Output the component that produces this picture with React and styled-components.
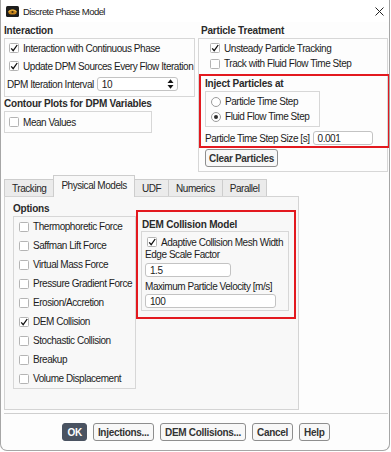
import React from "react";
import styled, { createGlobalStyle } from "styled-components";

const GlobalStyle = createGlobalStyle`
  * { box-sizing: border-box; }
  body {
    margin: 0;
    background: #ffffff;
    font-family: "Liberation Sans", Arial, sans-serif;
    font-size: 10px;
    letter-spacing: -0.45px;
    color: #1c1c1c;
  }
`;

const Window = styled.div`
  width: 390px;
  height: 451px;
  border: 1px solid #a6a6a6;
  border-top: none;
  border-radius: 0 0 7px 7px;
  background: #fdfdfd;
  display: flex;
  flex-direction: column;
  overflow: hidden;
`;

const TitleBar = styled.div`
  height: 22px;
  display: flex;
  align-items: center;
  gap: 4px;
  padding: 0 5px 0 5px;
  background: #ffffff;
`;

const TitleText = styled.span`
  font-size: 9.5px;
  letter-spacing: -0.55px;
  color: #1a1a1a;
`;

const CloseIcon = styled.svg`
  margin-left: auto;
`;

const Body = styled.div`
  flex: 1;
  display: flex;
  flex-direction: column;
  padding: 0 1px 0 3px;
`;

const Top = styled.div`
  display: grid;
  grid-template-columns: 191px 190px;
  column-gap: 3px;
  padding-top: 2px;
`;

const Column = styled.div`
  display: flex;
  flex-direction: column;
  align-items: stretch;
`;

const SectionTitle = styled.div`
  height: ${(p) => p.$h || 14}px;
  line-height: ${(p) => p.$h || 14}px;
  padding-left: ${(p) => p.$indent || 0}px;
  font-weight: bold;
  letter-spacing: -0.2px;
  color: #2a2a2a;
  white-space: nowrap;
`;

const GroupBox = styled.div`
  border: 1px solid #d7d7d7;
  padding: ${(p) => p.$pad || "0"};
  width: ${(p) => (p.$w ? `${p.$w}px` : "auto")};
  display: flex;
  flex-direction: column;
`;

const Highlight = styled.div`
  border: 2px solid #e3191f;
  padding: ${(p) => p.$pad || "0"};
  margin: ${(p) => p.$margin || "0"};
  display: flex;
  flex-direction: column;
  align-items: flex-start;
`;

const Row = styled.div`
  display: flex;
  align-items: center;
  gap: ${(p) => p.$gap ?? 4}px;
  height: ${(p) => p.$h || 18}px;
  padding-left: ${(p) => p.$indent || 0}px;
  padding-top: ${(p) => p.$top || 0}px;
  white-space: nowrap;
`;

const Box = styled.span`
  width: 10px;
  height: 10px;
  border: 1px solid #b4b4b4;
  border-radius: 1.5px;
  background: #ffffff;
  display: inline-flex;
  align-items: center;
  justify-content: center;
  flex: none;
`;

const Radio = styled.span`
  width: 10px;
  height: 10px;
  border: 1px solid #9c9c9c;
  border-radius: 50%;
  background: #ffffff;
  display: inline-flex;
  align-items: center;
  justify-content: center;
  flex: none;

  &::after {
    content: "";
    width: 4px;
    height: 4px;
    border-radius: 50%;
    background: ${(p) => (p.$on ? "#2d2d2d" : "transparent")};
  }
`;

const Input = styled.div`
  width: ${(p) => p.$w}px;
  height: 14px;
  margin-top: ${(p) => p.$mt || 0}px;
  border: 1px solid #c3c3c3;
  border-radius: 3px;
  background: #ffffff;
  display: flex;
  align-items: center;
  justify-content: space-between;
  padding: 0 3px 0 4px;
  flex: none;
`;

const Label = styled.div`
  height: ${(p) => p.$h}px;
  line-height: ${(p) => p.$h}px;
  margin-top: ${(p) => p.$mt || 0}px;
  white-space: nowrap;
`;

const Button = styled.button`
  height: 18px;
  padding: 0 ${(p) => p.$px || 4}px;
  margin: ${(p) => p.$margin || "0"};
  border: 1px solid ${(p) => (p.$primary ? "#4a5361" : "#8e8e8e")};
  border-radius: 3px;
  background: ${(p) => (p.$primary ? "#4a5361" : "#f8f8f8")};
  color: ${(p) => (p.$primary ? "#ffffff" : "#333333")};
  font-family: "Liberation Sans", Arial, sans-serif;
  font-size: 10px;
  font-weight: bold;
  letter-spacing: -0.3px;
  min-width: 22px;
  white-space: nowrap;
  cursor: default;
`;

const TabsWrap = styled.div`
  width: 295px;
  margin-top: 3px;
  display: flex;
  flex-direction: column;
`;

const TabBar = styled.div`
  height: 21px;
  display: flex;
  align-items: flex-end;
`;

const Tab = styled.div`
  position: relative;
  z-index: ${(p) => (p.$active ? 2 : 1)};
  height: ${(p) => (p.$active ? 22 : 17)}px;
  margin-bottom: ${(p) => (p.$active ? -1 : 0)}px;
  margin-right: -1px;
  padding: 0 7px ${(p) => (p.$active ? 3 : 0)}px;
  border: 1px solid #cdcdcd;
  border-bottom: none;
  background: ${(p) => (p.$active ? "#f8f8f8" : "#ebebeb")};
  display: flex;
  align-items: center;
  color: #262626;
  white-space: nowrap;
`;

const Panel = styled.div`
  height: 214px;
  border: 1px solid #d4d4d4;
  background: #f8f8f8;
  display: grid;
  grid-template-columns: 123px 160px;
  align-items: start;
  padding: 5px 0 0 8px;
`;

const Footer = styled.div`
  margin-top: 3px;
  border-top: 1px solid #cfcfcf;
  padding-top: 9px;
  display: flex;
  justify-content: center;
  gap: 6px;
`;

const Tick = () => (
  <svg width="8" height="8" viewBox="0 0 8 8">
    <path d="M1.2 4.3 L3.2 6.7 L7.2 1" fill="none" stroke="#111" strokeWidth="1.3" />
  </svg>
);

const CheckRow = ({ label, checked, h, indent }) => (
  <Row $h={h} $indent={indent}>
    <Box>{checked && <Tick />}</Box>
    <span>{label}</span>
  </Row>
);

const RadioRow = ({ label, on }) => (
  <Row $h={15} $indent={5}>
    <Radio $on={on} />
    <span>{label}</span>
  </Row>
);

const AppIcon = () => (
  <svg width="13" height="11" viewBox="0 0 13 11">
    <rect x="0" y="0" width="13" height="11" rx="1.5" fill="#1d1d1d" />
    <ellipse cx="6.5" cy="6" rx="4.2" ry="2.6" fill="#c7841c" />
    <path d="M2.6 6 C4 3.4 9 3.4 10.4 6" fill="none" stroke="#f2c04c" strokeWidth="1" />
    <circle cx="6.5" cy="6" r="1.1" fill="#3a2a10" />
  </svg>
);

const SpinArrows = () => (
  <svg width="7" height="12" viewBox="0 0 7 12">
    <path d="M0.5 5 L3.5 1.2 L6.5 5 Z" fill="#151515" />
    <path d="M0.5 7 L3.5 10.8 L6.5 7 Z" fill="#151515" />
  </svg>
);

const options = [
  ["Thermophoretic Force", false],
  ["Saffman Lift Force", false],
  ["Virtual Mass Force", false],
  ["Pressure Gradient Force", false],
  ["Erosion/Accretion", false],
  ["DEM Collision", true],
  ["Stochastic Collision", false],
  ["Breakup", false],
  ["Volume Displacement", false],
];

const tabs = ["Tracking", "Physical Models", "UDF", "Numerics", "Parallel"];

export default function App() {
  return (
    <>
      <GlobalStyle />
      <Window>
        <TitleBar>
          <AppIcon />
          <TitleText>Discrete Phase Model</TitleText>
          <CloseIcon width="9" height="9" viewBox="0 0 9 9">
            <path d="M0.5 0.5 L8.5 8.5 M8.5 0.5 L0.5 8.5" stroke="#222" strokeWidth="1" />
          </CloseIcon>
        </TitleBar>

        <Body>
          <Top>
            <Column>
              <SectionTitle>Interaction</SectionTitle>
              <GroupBox $pad="0 0 3px">
                <CheckRow label="Interaction with Continuous Phase" checked indent={4} />
                <CheckRow label="Update DPM Sources Every Flow Iteration" checked indent={4} />
                <Row $indent={2} $gap={3}>
                  <span>DPM Iteration Interval</span>
                  <Input $w={81}>
                    <span>10</span>
                    <SpinArrows />
                  </Input>
                </Row>
              </GroupBox>
              <SectionTitle>Contour Plots for DPM Variables</SectionTitle>
              <GroupBox $w={148}>
                <CheckRow label="Mean Values" h={20} indent={4} />
              </GroupBox>
            </Column>

            <Column>
              <SectionTitle $indent={3}>Particle Treatment</SectionTitle>
              <GroupBox $pad="1px 0 4px">
                <CheckRow label="Unsteady Particle Tracking" checked h={16} indent={11} />
                <CheckRow label="Track with Fluid Flow Time Step" h={15} indent={11} />
                <Highlight $pad="0 0 0 4px" $margin="3px -3px 0 0">
                  <SectionTitle $h={15}>Inject Particles at</SectionTitle>
                  <GroupBox $w={115} $pad="2px 0">
                    <RadioRow label="Particle Time Step" />
                    <RadioRow label="Fluid Flow Time Step" on />
                  </GroupBox>
                  <Row $h={19} $top={3} $gap={3}>
                    <span>Particle Time Step Size [s]</span>
                    <Input $w={60}>
                      <span>0.001</span>
                    </Input>
                  </Row>
                </Highlight>
                <div>
                  <Button $px={3} $margin="1px 0 0 6px">Clear Particles</Button>
                </div>
              </GroupBox>
            </Column>
          </Top>

          <TabsWrap>
            <TabBar>
              {tabs.map((t) => (
                <Tab key={t} $active={t === "Physical Models"}>
                  {t}
                </Tab>
              ))}
            </TabBar>
            <Panel>
              <Column>
                <SectionTitle>Options</SectionTitle>
                <GroupBox>
                  {options.map(([label, checked]) => (
                    <CheckRow key={label} label={label} checked={checked} h={19} indent={5} />
                  ))}
                </GroupBox>
              </Column>

              <Highlight $pad="6px 5px 6px 3px" $margin="8px 0 0 0">
                <SectionTitle $h={13} $indent={1}>DEM Collision Model</SectionTitle>
                <GroupBox $w={148} $pad="3px 3px 2px">
                  <CheckRow label="Adaptive Collision Mesh Width" checked h={14} indent={2} />
                  <Label $h={12}>Edge Scale Factor</Label>
                  <Input $w={86} $mt={2}>
                    <span>1.5</span>
                  </Input>
                  <Label $h={13} $mt={3}>Maximum Particle Velocity [m/s]</Label>
                  <Input $w={131} $mt={1}>
                    <span>100</span>
                  </Input>
                </GroupBox>
              </Highlight>
            </Panel>
          </TabsWrap>

          <Footer>
            <Button $primary>OK</Button>
            <Button>Injections...</Button>
            <Button>DEM Collisions...</Button>
            <Button>Cancel</Button>
            <Button>Help</Button>
          </Footer>
        </Body>
      </Window>
    </>
  );
}
